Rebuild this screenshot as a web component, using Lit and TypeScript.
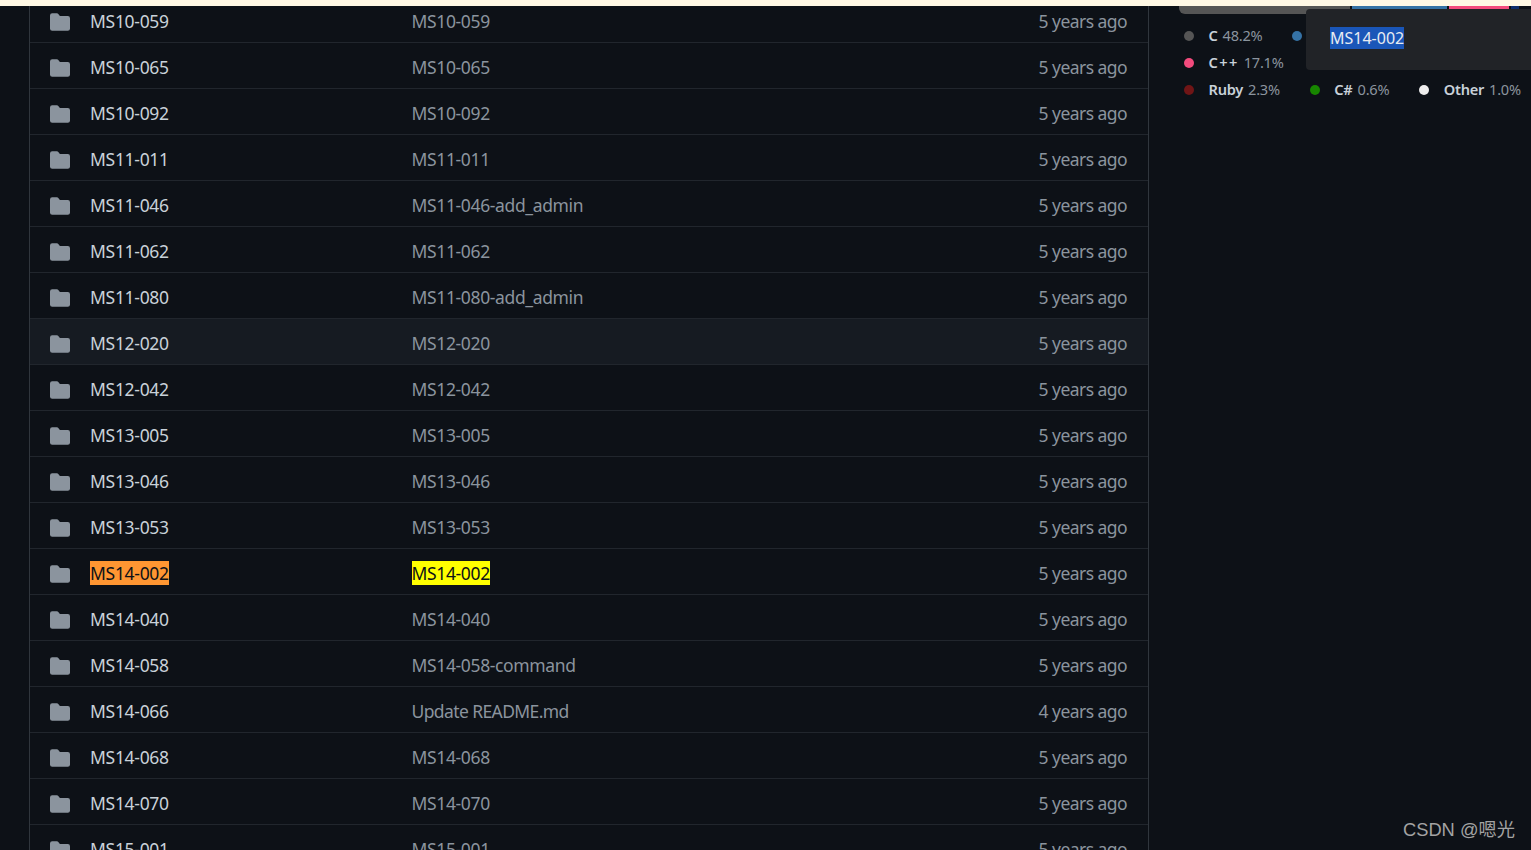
import { LitElement, html, css } from "lit";
import { customElement } from "lit/decorators.js";

type Row = { name: string; msg: string; age: string; hover?: boolean; hit?: boolean; tight?: boolean };
const same = (name: string, age = "5 years ago"): Row => ({ name, msg: name, age });
const rows: Row[] = [
  same("MS10-059"), same("MS10-065"), same("MS10-092"), same("MS11-011"),
  { name: "MS11-046", msg: "MS11-046-add_admin", age: "5 years ago" },
  same("MS11-062"),
  { name: "MS11-080", msg: "MS11-080-add_admin", age: "5 years ago" },
  { ...same("MS12-020"), hover: true },
  same("MS12-042"), same("MS13-005"), same("MS13-046"), same("MS13-053"),
  { ...same("MS14-002"), hit: true },
  same("MS14-040"),
  { name: "MS14-058", msg: "MS14-058-command", age: "5 years ago" },
  { name: "MS14-066", msg: "Update README.md", age: "4 years ago", tight: true },
  same("MS14-068"), same("MS14-070"), same("MS15-001"),
];

const legend = [
  [["C", "48.2%", "#555555"], ["", "", "#3572a5"]],
  [["C++", "17.1%", "#f34b7d"]],
  [["Ruby", "2.3%", "#701516"], ["C#", "0.6%", "#178600"], ["Other", "1.0%", "#ededed"]],
];

@customElement("app-root")
export class AppRoot extends LitElement {
  static styles = css`
    :host {
      display: block;
      height: 850px;
      overflow: hidden;
      position: relative;
      background: #0d1117;
      font-family: "Noto Sans", "Open Sans", "Liberation Sans", sans-serif;
      font-size: 17.5px;
    }
    .strip { height: 6px; background: #fff8e5; position: relative; z-index: 2; }
    .page { display: flex; height: 844px; overflow: hidden; }
    .list {
      margin: -9px 0 0 29px;
      width: 1120px;
      flex: none;
      box-sizing: border-box;
      border-left: 1px solid #30363d;
      border-right: 1px solid #30363d;
    }
    .row {
      height: 46px;
      box-sizing: border-box;
      border-bottom: 1px solid #21262d;
      display: flex;
      align-items: center;
      padding: 2px 21px 0 20px;
      letter-spacing: -0.3px;
    }
    .row.hover { background: #161b22; }
    .icon { width: 20px; height: 18px; flex: none; margin: 2px 20px 0 0; fill: #8b949e; display: block; }
    .name { width: 321.5px; flex: none; color: #c9d1d9; }
    .msg { flex: 1; color: #8b949e; letter-spacing: -0.36px; }
    .msg.tight { letter-spacing: -0.6px; }
    .age { color: #8b949e; text-align: right; letter-spacing: -0.55px; }
    mark.a { background: #ff9632; color: #0d1117; }
    mark.b { background: #ffff00; color: #0d1117; }
    .side { margin-left: 30px; flex: 1; min-width: 0; }
    .bar { display: flex; height: 9px; margin-top: -1px; width: 352px; gap: 2px; overflow: hidden; border-radius: 0 0 6px 6px; }
    .bar i { display: block; height: 100%; }
    .legend { margin-top: 8px; font-size: 14.6px; line-height: 27px; letter-spacing: -0.25px; }
    .legend div { display: flex; height: 27px; align-items: center; padding-left: 5px; }
    .item { display: flex; align-items: center; margin-right: 30px; white-space: nowrap; }
    .dot { width: 10px; height: 10px; border-radius: 50%; margin-right: 14.5px; flex: none; }
    .item b { color: #c9d1d9; font-weight: 600; margin-right: 5px; }
    .item b.wide { letter-spacing: 1.4px; }
    .item em { color: #8b949e; font-style: normal; }
    .tip {
      position: absolute;
      left: 1306px;
      top: 9px;
      width: 225px;
      height: 61px;
      box-sizing: border-box;
      padding: 18px 0 0 24px;
      background: #212327;
      border-radius: 4px 0 0 4px;
      color: #e3e6ea;
      font-size: 16px;
      line-height: 22px;
      z-index: 3;
    }
    .tip span { background: #1a56b8; color: #e8ecf2; display: inline-block; }
    .mark {
      position: absolute;
      right: 16px;
      bottom: 8px;
      font-family: "Liberation Sans", "Noto Sans CJK SC", sans-serif;
      font-size: 18.3px;
      color: #a3a3a3;
      line-height: 24px;
    }
  `;

  private folder() {
    return html`<svg class="icon" viewBox="0 0 20 18"><path d="M0 2.5A2.2 2.2 0 0 1 2.2.3h4.6c.7 0 1.3.3 1.7.9l1.2 1.6c.2.2.4.3.7.3h7.4A2.2 2.2 0 0 1 20 5.3v10.4a2.2 2.2 0 0 1-2.2 2.1H2.2A2.2 2.2 0 0 1 0 15.7z"/></svg>`;
  }

  render() {
    return html`
      <div class="strip"></div>
      <div class="page">
        <div class="list">
          ${rows.map(
            (r) => html`<div class="row ${r.hover ? "hover" : ""}">
              ${this.folder()}
              <div class="name">${r.hit ? html`<mark class="a">${r.name}</mark>` : r.name}</div>
              <div class="msg ${r.tight ? "tight" : ""}">${r.hit ? html`<mark class="b">${r.msg}</mark>` : r.msg}</div>
              <div class="age">${r.age}</div>
            </div>`
          )}
        </div>
        <div class="side">
          <div class="bar">
            <i style="width:171px;background:#555555"></i>
            <i style="width:95px;background:#3572a5"></i>
            <i style="width:60px;background:#f34b7d"></i>
            <i style="width:8px;background:#0d2d6b"></i>
          </div>
          <div class="legend">
            ${legend.map(
              (line) => html`<div>
                ${line.map(
                  ([n, p, c]) => html`<span class="item"><span class="dot" style="background:${c}"></span>${n ? html`<b class="${n === "C++" ? "wide" : ""}">${n}</b><em>${p}</em>` : ""}</span>`
                )}
              </div>`
            )}
          </div>
        </div>
      </div>
      <div class="tip"><span>MS14-002</span></div>
      <div class="mark">CSDN @嗯光</div>
    `;
  }
}
